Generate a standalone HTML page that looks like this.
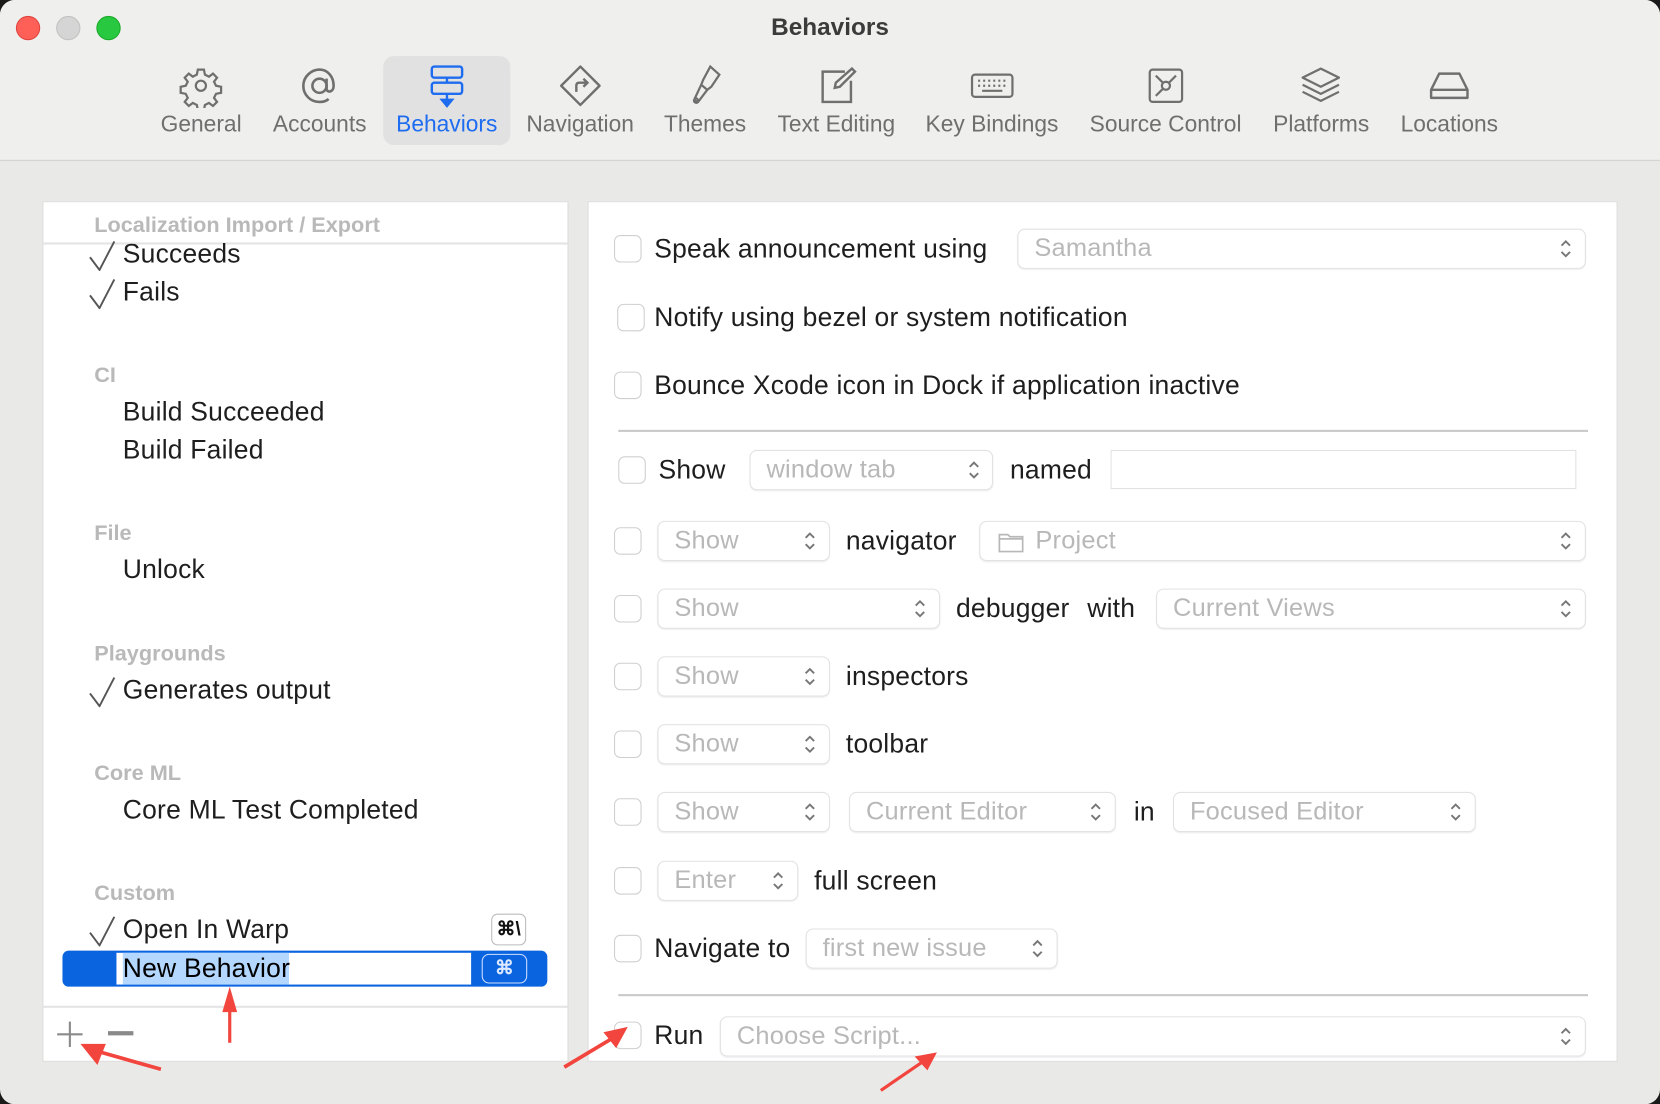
<!DOCTYPE html>
<html><head><meta charset="utf-8"><style>
*{margin:0;padding:0;box-sizing:border-box}
html,body{width:1660px;height:1104px;overflow:hidden;background:#1a1a1a;font-family:"Liberation Sans",sans-serif}
#s{width:1568px;height:1043px;transform:scale(1.05867);transform-origin:0 0;position:relative}
.win{position:absolute;left:0;top:0;width:1568px;height:1043px;background:#e9e9e8;border-radius:14px;overflow:hidden}
.top{position:absolute;left:0;top:0;width:1568px;height:152px;background:#efefee;border-bottom:1.5px solid #d2d2d2}
.tl{position:absolute;top:15px;width:23px;height:23px;border-radius:50%}
.title{position:absolute;left:0;width:1568px;top:12px;text-align:center;font-weight:bold;font-size:23px;color:#3b3b3b}
.ti{position:absolute;top:60px;text-align:center;color:#6f6f6f;font-size:21.5px;transform:translateX(-50%);white-space:nowrap}
.ti svg{display:block;margin:0 auto 4px;width:42px;height:42px}
.ti span{display:block;margin-top:-1px}
.sel{position:absolute;left:362px;top:53px;width:120px;height:84px;background:#e1e1e1;border-radius:10px}
.panel{position:absolute;background:#fff}
.t{position:absolute;font-size:25px;letter-spacing:0.2px;color:#1e1e1e;white-space:nowrap;line-height:1}
.h{position:absolute;font-size:20.5px;color:#b9b9b9;white-space:nowrap;line-height:1;font-weight:bold}
.cb{position:absolute;width:26px;height:26px;border:1.5px solid #cfcfcf;border-radius:6px;background:#fff}
.pp{position:absolute;height:38px;border:1px solid #e2e2e2;border-radius:7px;background:#fff;box-shadow:0 1px 1px rgba(0,0,0,.06);color:#b8b8b8;font-size:24px;line-height:36px;padding-left:15px;white-space:nowrap;letter-spacing:0.2px}
.sep{position:absolute;height:1.5px;background:#c9c9c9}
</style></head><body><div id="s"><div class="win">
<div class="top"></div>
<div class="tl" style="left:15px;background:#fe5f57;border:1px solid #e0443e"></div>
<div class="tl" style="left:53px;background:#d5d5d5;border:1px solid #c2c2c2"></div>
<div class="tl" style="left:91px;background:#28c840;border:1px solid #1aab29"></div>
<div class="title">Behaviors</div>
<div class="sel"></div>

<div class="ti" style="left:190px"><svg viewBox="0 0 44 44" fill="none" stroke="#6f6f6f" stroke-width="2.2"><path d="M19 6h6l1 5 4 2 4-3 4 4-3 4 2 4 5 1v6l-5 1-2 4 3 4-4 4-4-3-4 2-1 5h-6l-1-5-4-2-4 3-4-4 3-4-2-4-5-1v-6l5-1 2-4-3-4 4-4 4 3 4-2z"/><circle cx="22" cy="22" r="5"/></svg><span>General</span></div>
<div class="ti" style="left:302px"><svg viewBox="0 0 44 44" fill="none" stroke="#6f6f6f" stroke-width="2.6"><circle cx="22" cy="22" r="7"/><path d="M29 15v10c0 4 7 4 7-3 0-9-6-16-14-16S6 13 6 22s7 16 16 16c4 0 7-1 9-3"/></svg><span>Accounts</span></div>
<div class="ti" style="left:422px;color:#1e6cf0"><svg viewBox="0 0 44 44" fill="none" stroke="#1e6cf0" stroke-width="2.4"><rect x="7" y="3" width="30" height="11" rx="2.5"/><rect x="7" y="19" width="30" height="11" rx="2.5"/><path d="M22 14v5M22 30v8"/><path d="M17 36h10l-5 6z" fill="#1e6cf0"/></svg><span>Behaviors</span></div>
<div class="ti" style="left:548px"><svg viewBox="0 0 44 44" fill="none" stroke="#6f6f6f" stroke-width="2.4"><path d="M22 3l19 19-19 19L3 22z" stroke-linejoin="round"/><path d="M18 28v-6c0-2 1-3 3-3h8M25 15l4 4-4 4"/></svg><span>Navigation</span></div>
<div class="ti" style="left:666px"><svg viewBox="0 0 44 44" fill="none" stroke="#6f6f6f" stroke-width="2.2"><path d="M27 3l9 8-8 12-4 3-6-5 2-5zM18 21l6 5-9 12c-2 2-5 0-4-2z"/><circle cx="13" cy="36" r="1.5"/></svg><span>Themes</span></div>
<div class="ti" style="left:790px"><svg viewBox="0 0 44 44" fill="none" stroke="#6f6f6f" stroke-width="2.4"><path d="M30 8H8v30h28V17"/><path d="M37 5l3 3-15 15-5 1 1-5z"/></svg><span>Text Editing</span></div>
<div class="ti" style="left:937px"><svg viewBox="0 0 44 44" fill="none" stroke="#6f6f6f" stroke-width="2.2"><rect x="2" y="11" width="40" height="22" rx="3"/><path d="M8 17h2M13 17h2M18 17h2M23 17h2M28 17h2M33 17h2M8 22h2M13 22h2M18 22h2M23 22h2M28 22h2M33 22h2M12 27h20"/></svg><span>Key Bindings</span></div>
<div class="ti" style="left:1101px"><svg viewBox="0 0 44 44" fill="none" stroke="#6f6f6f" stroke-width="2.2"><rect x="6" y="6" width="32" height="32" rx="3"/><circle cx="22" cy="22" r="4"/><path d="M12 12l7 7M32 12l-7 7M12 32l7-7"/></svg><span>Source Control</span></div>
<div class="ti" style="left:1248px"><svg viewBox="0 0 44 44" fill="none" stroke="#6f6f6f" stroke-width="2.2" stroke-linejoin="round"><path d="M22 5l18 9-18 9-18-9z"/><path d="M4 21l18 9 18-9M4 28l18 9 18-9"/></svg><span>Platforms</span></div>
<div class="ti" style="left:1369px"><svg viewBox="0 0 44 44" fill="none" stroke="#6f6f6f" stroke-width="2.4"><path d="M12 10h20l8 16v8H4v-8z" stroke-linejoin="round"/><path d="M4 26h36"/></svg><span>Locations</span></div>

<!-- left panel -->
<div class="panel" style="left:40px;top:190px;width:497px;height:813px;border:1px solid #dcdcdc"></div>
<div class="h" style="left:89px;top:203px">Localization Import / Export</div>
<div style="position:absolute;left:41px;top:229px;width:495px;height:1.5px;background:#e4e4e4"></div>
<div class="t" style="left:116px;top:228px">Succeeds</div>
<div class="t" style="left:116px;top:264px">Fails</div>
<div class="h" style="left:89px;top:345px">CI</div>
<div class="t" style="left:116px;top:377px">Build Succeeded</div>
<div class="t" style="left:116px;top:413px">Build Failed</div>
<div class="h" style="left:89px;top:494px">File</div>
<div class="t" style="left:116px;top:526px">Unlock</div>
<div class="h" style="left:89px;top:608px">Playgrounds</div>
<div class="t" style="left:116px;top:640px">Generates output</div>
<div class="h" style="left:89px;top:721px">Core ML</div>
<div class="t" style="left:116px;top:753px">Core ML Test Completed</div>
<div class="h" style="left:89px;top:834px">Custom</div>
<div class="t" style="left:116px;top:866px">Open In Warp</div>
<div style="position:absolute;left:464px;top:863px;width:33px;height:30px;border:1.5px solid #bbb;border-radius:6px;font-size:18px;font-weight:bold;text-align:center;line-height:27px;color:#111">⌘\</div>
<div style="position:absolute;left:59px;top:898px;width:458px;height:34px;background:#0a64df;border-radius:6px"></div>
<div style="position:absolute;left:110px;top:900px;width:335px;height:30px;background:#fff"></div>
<div style="position:absolute;left:116px;top:900px;width:157px;height:30px;background:#b3d7ff"></div>
<div class="t" style="left:116px;top:903px;color:#000">New Behavior</div>
<div style="position:absolute;left:455px;top:901px;width:43px;height:28px;border:1.5px solid #cfe0ff;border-radius:7px;font-size:18px;font-weight:bold;text-align:center;line-height:25px;color:#dce9ff">⌘</div>
<div style="position:absolute;left:41px;top:950px;width:495px;height:1.5px;background:#e4e4e4"></div>
<div style="position:absolute;left:54px;top:976px;width:24px;height:2px;background:#8a8a8a"></div>
<div style="position:absolute;left:65px;top:965px;width:2px;height:24px;background:#8a8a8a"></div>
<div style="position:absolute;left:102px;top:974px;width:24px;height:4px;background:#8a8a8a"></div>

<!-- right panel -->
<div class="panel" style="left:555px;top:190px;width:973px;height:813px;border:1px solid #dcdcdc"></div>
<div class="cb" style="left:580px;top:222px"></div><div class="t" style="left:618px;top:223px">Speak announcement using</div>
<div class="pp" style="left:961px;top:216px;width:537px">Samantha</div>
<div class="cb" style="left:583px;top:287px"></div><div class="t" style="left:618px;top:288px">Notify using bezel or system notification</div>
<div class="cb" style="left:580px;top:351px"></div><div class="t" style="left:618px;top:352px">Bounce Xcode icon in Dock if application inactive</div>
<div class="sep" style="left:584px;top:406px;width:916px"></div>
<div class="cb" style="left:584px;top:431px"></div><div class="t" style="left:622px;top:432px">Show</div>
<div class="pp" style="left:708px;top:425px;width:230px">window tab</div>
<div class="t" style="left:954px;top:432px">named</div>
<div style="position:absolute;left:1049px;top:425px;width:440px;height:37px;border:1px solid #e2e2e2;background:#fff"></div>

<div class="cb" style="left:580px;top:498px"></div><div class="pp" style="left:621px;top:492px;width:163px">Show</div><div class="t" style="left:799px;top:499px">navigator</div>
<div class="pp" style="left:925px;top:492px;width:573px;padding-left:52px"><svg style="position:absolute;left:17px;top:9px" width="24" height="20" viewBox="0 0 24 20" fill="none" stroke="#b8b8b8" stroke-width="1.6"><path d="M1 3h8l2 2h12v14H1z"/><path d="M1 7h22"/></svg>Project</div>
<div class="cb" style="left:580px;top:562px"></div><div class="pp" style="left:621px;top:556px;width:267px">Show</div><div class="t" style="left:903px;top:563px">debugger</div><div class="t" style="left:1027px;top:563px">with</div>
<div class="pp" style="left:1092px;top:556px;width:406px">Current Views</div>
<div class="cb" style="left:580px;top:626px"></div><div class="pp" style="left:621px;top:620px;width:163px">Show</div><div class="t" style="left:799px;top:627px">inspectors</div>
<div class="cb" style="left:580px;top:690px"></div><div class="pp" style="left:621px;top:684px;width:163px">Show</div><div class="t" style="left:799px;top:691px">toolbar</div>
<div class="cb" style="left:580px;top:754px"></div><div class="pp" style="left:621px;top:748px;width:163px">Show</div>
<div class="pp" style="left:802px;top:748px;width:252px">Current Editor</div><div class="t" style="left:1071px;top:755px">in</div>
<div class="pp" style="left:1108px;top:748px;width:286px">Focused Editor</div>
<div class="cb" style="left:580px;top:819px"></div><div class="pp" style="left:621px;top:813px;width:133px">Enter</div><div class="t" style="left:769px;top:820px">full screen</div>
<div class="cb" style="left:580px;top:883px"></div><div class="t" style="left:618px;top:884px">Navigate to</div>
<div class="pp" style="left:761px;top:877px;width:238px">first new issue</div>
<div class="sep" style="left:584px;top:939px;width:916px"></div>
<div class="cb" style="left:580px;top:965px"></div><div class="t" style="left:618px;top:966px">Run</div>
<div class="pp" style="left:680px;top:960px;width:818px">Choose Script...</div>

<svg style="position:absolute;left:0;top:0" width="1568" height="1043">
<defs>
<symbol id="chev" viewBox="0 0 12 20"><path d="M2 7l4-4 4 4M2 13l4 4 4-4" fill="none" stroke="#777" stroke-width="1.8"/></symbol>
<symbol id="ck" viewBox="0 0 26 30"><path d="M1 17l9 12L24 2" fill="none" stroke="#555" stroke-width="1.8"/></symbol>
</defs>
<use href="#ck" x="84" y="226" width="26" height="30"/>
<use href="#ck" x="84" y="262" width="26" height="30"/>
<use href="#ck" x="84" y="638" width="26" height="30"/>
<use href="#ck" x="84" y="864" width="26" height="30"/>
<g fill="#f2453d" stroke="#f2453d">
<line x1="152" y1="1010" x2="92" y2="993" stroke-width="3.5"/>
<path d="M76 986L100 986L92 1006Z" stroke="none"/>
<line x1="217" y1="985" x2="217" y2="950" stroke-width="3"/>
<path d="M217 932L224 956L210 956Z" stroke="none"/>
<line x1="533" y1="1008" x2="578" y2="981" stroke-width="3.5"/>
<path d="M593 970L582 990L570 975Z" stroke="none"/>
<line x1="832" y1="1030" x2="870" y2="1004" stroke-width="3"/>
<path d="M885 994L876 1011L864 998Z" stroke="none"/>
</g>
<g>
<use href="#chev" x="1473" y="225" width="12" height="20"/>
<use href="#chev" x="914" y="434" width="12" height="20"/>
<use href="#chev" x="759" y="501" width="12" height="20"/>
<use href="#chev" x="1473" y="501" width="12" height="20"/>
<use href="#chev" x="863" y="565" width="12" height="20"/>
<use href="#chev" x="1473" y="565" width="12" height="20"/>
<use href="#chev" x="759" y="629" width="12" height="20"/>
<use href="#chev" x="759" y="693" width="12" height="20"/>
<use href="#chev" x="759" y="757" width="12" height="20"/>
<use href="#chev" x="1029" y="757" width="12" height="20"/>
<use href="#chev" x="1369" y="757" width="12" height="20"/>
<use href="#chev" x="729" y="822" width="12" height="20"/>
<use href="#chev" x="974" y="886" width="12" height="20"/>
<use href="#chev" x="1473" y="969" width="12" height="20"/>
</g>
</svg>
</div></div></body></html>
